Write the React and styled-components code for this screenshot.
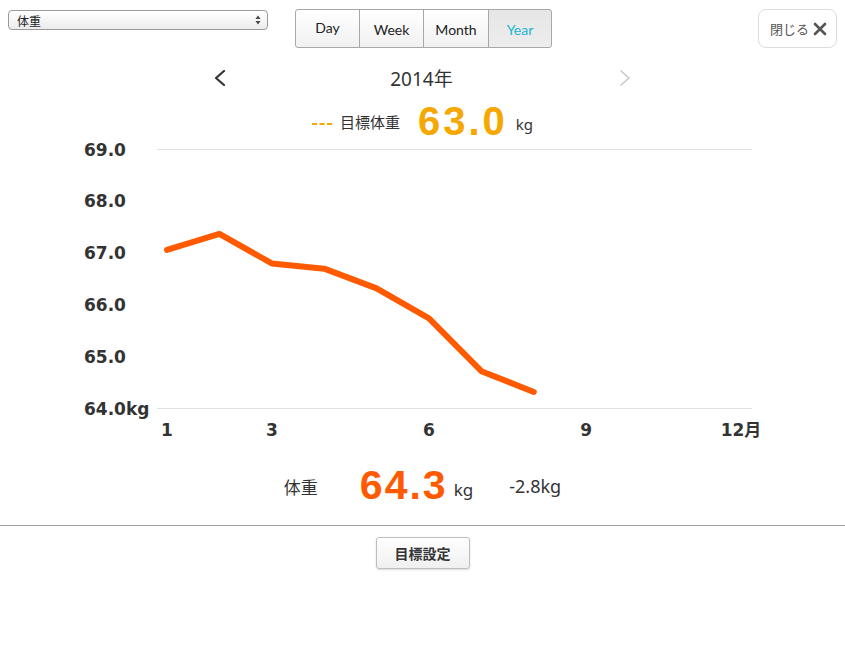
import React from 'react';
import styled, { createGlobalStyle } from 'styled-components';

const GlobalStyle = createGlobalStyle`
  body {
    margin: 0;
    background: #fff;
    font-family: "Noto Sans", "Noto Sans CJK JP", sans-serif;
    color: #333;
  }
`;

const Page = styled.div`
  width: 845px;
  height: 645px;
  overflow: hidden;
`;

// Barra superior
const Header = styled.div`
  display: flex;
  align-items: flex-start;
  padding: 9px 8px 0 8px;
  height: 39px;
`;

const Select = styled.div`
  box-sizing: border-box;
  width: 260px;
  height: 20px;
  margin-top: 1px;
  border: 1px solid #9a9a9a;
  border-radius: 4px;
  background: linear-gradient(#ffffff, #ececec);
  display: flex;
  align-items: center;
  justify-content: space-between;
  padding: 0 6px 0 8px;
  font-family: "Noto Sans CJK JP", sans-serif;
  font-size: 12px;
  color: #222;
`;

const Segmented = styled.div`
  display: flex;
  margin-left: 27px;
`;

const Seg = styled.button`
  box-sizing: border-box;
  height: 39px;
  width: ${p => p.$w}px;
  margin-left: -1px;
  border: 1px solid #a8a8a8;
  background: ${p => (p.$active ? 'linear-gradient(#e6e6e6, #ededed)' : 'linear-gradient(#ffffff, #f1f1f1)')};
  color: ${p => (p.$active ? '#1cb5d3' : '#222')};
  font-family: "Lato", "Noto Sans", sans-serif;
  font-size: 14px;
  padding: ${p => (p.$first ? '0 0 3px' : '2px 0 0')};
  &:first-child {
    margin-left: 0;
    border-radius: 3px 0 0 3px;
  }
  &:last-child {
    border-radius: 0 3px 3px 0;
  }
`;

const CloseButton = styled.button`
  box-sizing: border-box;
  margin-left: auto;
  width: 79px;
  height: 39px;
  border: 1px solid #dcdcdc;
  border-radius: 8px;
  background: #fff;
  display: flex;
  align-items: center;
  justify-content: center;
  gap: 4px;
  font-family: "Noto Sans CJK JP", sans-serif;
  font-size: 13px;
  color: #555;
  padding: 0 0 0 2px;
`;

// Navegação do ano
const Nav = styled.div`
  width: 417px;
  height: 60px;
  margin: 0 auto;
  display: flex;
  align-items: center;
  justify-content: space-between;
`;

const YearTitle = styled.div`
  font-family: "Noto Sans", "Noto Sans CJK JP", sans-serif;
  font-size: 19px;
  color: #333;
  padding-right: 2px;
`;

const GoalRow = styled.div`
  height: 26px;
  display: flex;
  align-items: center;
  justify-content: center;
  font-family: "Noto Sans CJK JP", sans-serif;
  font-size: 15px;
  color: #333;
`;

const Dashes = styled.svg`
  margin: 6px 8px 0 0;
`;

const BigValue = styled.span`
  font-family: "Liberation Sans", Arial, sans-serif;
  font-weight: bold;
  font-size: ${p => p.$size}px;
  letter-spacing: ${p => p.$spacing || 2}px;
  color: ${p => p.$color};
  margin: ${p => p.$margin};
  line-height: 1;
`;

const Unit = styled.span`
  font-family: "Noto Sans", sans-serif;
  font-size: ${p => p.$size || 15}px;
  color: #333;
  position: relative;
  top: ${p => p.$top || 3}px;
`;

const ChartBox = styled.svg`
  display: block;
  width: 845px;
  height: 311px;
`;

const Summary = styled.div`
  height: 80px;
  display: flex;
  align-items: center;
  justify-content: center;
  font-family: "Noto Sans CJK JP", sans-serif;
`;

const SummaryLabel = styled.span`
  font-size: 17px;
  color: #333;
  margin-right: 42px;
  position: relative;
  top: 1px;
`;

const Diff = styled.span`
  font-family: "Noto Sans", sans-serif;
  font-size: 18px;
  color: #333;
  margin-left: 36px;
  position: relative;
  top: 1px;
`;

const Footer = styled.div`
  border-top: 1px solid #9e9e9e;
  display: flex;
  justify-content: center;
  padding-top: 11px;
`;

const GoalButton = styled.button`
  box-sizing: border-box;
  width: 94px;
  height: 32px;
  border: 1px solid #bdbdbd;
  border-radius: 3px;
  background: linear-gradient(#ffffff, #f0f0f0);
  box-shadow: 0 1px 2px rgba(0, 0, 0, 0.15);
  font-family: "Noto Sans CJK JP", sans-serif;
  font-weight: bold;
  font-size: 14px;
  color: #333;
`;

const data = [67.06, 67.37, 66.8, 66.7, 66.32, 65.74, 64.72, 64.32];
const top = 15.5;
const step = 51.8;
const yOf = v => top + (69 - v) * step;
const xOf = m => 167 + (m - 1) * 52.4;

function Chevron({ dir, color, width }) {
  const d = dir === 'left' ? 'M10 1 L2 8 L10 15' : 'M2 1 L10 8 L2 15';
  return (
    <svg width="12" height="16" viewBox="0 0 12 16">
      <path d={d} fill="none" stroke={color} strokeWidth={width} strokeLinecap="round" strokeLinejoin="round" />
    </svg>
  );
}

function Chart() {
  const labels = ['69.0', '68.0', '67.0', '66.0', '65.0', '64.0kg'];
  const months = [
    { m: 1, t: '1' },
    { m: 3, t: '3' },
    { m: 6, t: '6' },
    { m: 9, t: '9' },
    { m: 12, t: '12月' },
  ];
  const pts = data.map((v, i) => `${xOf(i + 1)},${yOf(v)}`).join(' ');
  return (
    <ChartBox viewBox="0 0 845 311">
      <line x1="157" x2="752" y1={top} y2={top} stroke="#e2e2e2" strokeWidth="1" />
      <line x1="157" x2="752" y1={top + 5 * step} y2={top + 5 * step} stroke="#e2e2e2" strokeWidth="1" />
      {labels.map((l, i) => (
        <text
          key={l}
          x="84"
          y={top + i * step + 6}
          fontFamily="DejaVu Sans, sans-serif"
          fontWeight="bold"
          fontSize="17"
          fill="#333"
        >
          {l}
        </text>
      ))}
      {months.map(({ m, t }) => (
        <text
          key={t}
          x={m === 12 ? 741 : xOf(m)}
          y="302"
          textAnchor="middle"
          fontFamily="DejaVu Sans, Noto Sans CJK JP, sans-serif"
          fontWeight="bold"
          fontSize="17"
          fill="#333"
        >
          {t}
        </text>
      ))}
      <polyline points={pts} fill="none" stroke="#ffffff" strokeWidth="9" strokeLinecap="round" strokeLinejoin="round" />
      <polyline points={pts} fill="none" stroke="#ff5a00" strokeWidth="6" strokeLinecap="round" strokeLinejoin="round" />
    </ChartBox>
  );
}

export default function App() {
  return (
    <Page>
      <GlobalStyle />
      <Header>
        <Select>
          <span>体重</span>
          <svg width="6" height="10" viewBox="0 0 6 10">
            <path d="M3 0.5 L5.5 4 L0.5 4 Z M3 9.5 L5.5 6 L0.5 6 Z" fill="#444" />
          </svg>
        </Select>
        <Segmented>
          <Seg $w={65} $first>Day</Seg>
          <Seg $w={65}>Week</Seg>
          <Seg $w={66}>Month</Seg>
          <Seg $w={64} $active>Year</Seg>
        </Segmented>
        <CloseButton>
          閉じる
          <svg width="14" height="14" viewBox="0 0 14 14">
            <path d="M2 2 L12 12 M12 2 L2 12" stroke="#555" strokeWidth="2.6" strokeLinecap="round" />
          </svg>
        </CloseButton>
      </Header>

      <Nav>
        <Chevron dir="left" color="#333" width={2.2} />
        <YearTitle>2014年</YearTitle>
        <Chevron dir="right" color="#c8c8c8" width={1.6} />
      </Nav>

      <GoalRow>
        <Dashes width="20" height="3" viewBox="0 0 20 3">
          <rect x="0" y="0" width="5" height="2" fill="#f6a800" />
          <rect x="7.5" y="0" width="5" height="2" fill="#f6a800" />
          <rect x="15" y="0" width="5" height="2" fill="#f6a800" />
        </Dashes>
        目標体重
        <BigValue $size={40} $spacing={3} $color="#f6a800" $margin="0 8px 0 18px">63.0</BigValue>
        <Unit>kg</Unit>
      </GoalRow>

      <Chart />

      <Summary>
        <SummaryLabel>体重</SummaryLabel>
        <BigValue $size={41} $color="#ff5a00" $margin="0 6px 0 0">64.3</BigValue>
        <Unit $size={17} $top={4}>kg</Unit>
        <Diff>-2.8kg</Diff>
      </Summary>

      <Footer>
        <GoalButton>目標設定</GoalButton>
      </Footer>
    </Page>
  );
}
